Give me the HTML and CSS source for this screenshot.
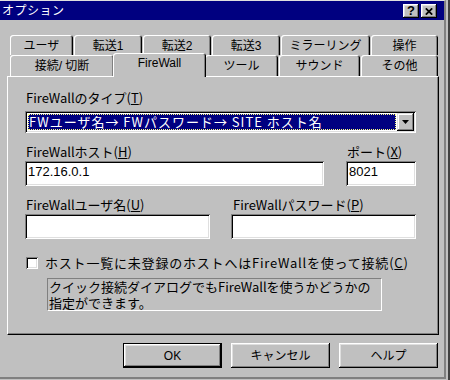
FILE: index.html
```html
<!DOCTYPE html>
<html lang="ja">
<head>
    <meta charset="utf-8">
    <title>オプション</title>
    <link rel="stylesheet" href="styles.css">
</head>
<body>
<div class="screen">
    <div class="window">
        <div class="titlebar">
            <span class="title">オプション</span>
            <div class="caption-buttons">
                <span class="cap-btn help">?</span>
                <span class="cap-btn close">
                    <svg width="8" height="7" viewBox="0 0 8 7"><path d="M0.8 0.3L7.2 6.7M7.2 0.3L0.8 6.7" stroke="#000" stroke-width="1.7" fill="none"/></svg>
                </span>
            </div>
        </div>

        <div class="client">
            <div class="tabs">
                <div class="tab-row row-back">
                    <div class="tab">ユーザ</div>
                    <div class="tab">転送1</div>
                    <div class="tab">転送2</div>
                    <div class="tab">転送3</div>
                    <div class="tab">ミラーリング</div>
                    <div class="tab">操作</div>
                </div>
                <div class="tab-row row-front">
                    <div class="tab">接続/ 切断</div>
                    <div class="tab selected">FireWall</div>
                    <div class="tab">ツール</div>
                    <div class="tab">サウンド</div>
                    <div class="tab">その他</div>
                </div>
            </div>

            <div class="panel">
                <div class="label">FireWallのタイプ(<u>T</u>)</div>
                <div class="combo">
                    <div class="combo-value">FWユーザ名→ FWパスワード→ SITE ホスト名</div>
                    <div class="combo-btn">
                        <svg width="7" height="4" viewBox="0 0 7 4"><path d="M0 0h7l-3.5 4z" fill="#000"/></svg>
                    </div>
                </div>

                <div class="field-row host-row">
                    <div class="field">
                        <div class="label">FireWallホスト(<u>H</u>)</div>
                        <div class="edit">172.16.0.1</div>
                    </div>
                    <div class="field">
                        <div class="label">ポート(<u>X</u>)</div>
                        <div class="edit">8021</div>
                    </div>
                </div>

                <div class="field-row user-row">
                    <div class="field">
                        <div class="label">FireWallユーザ名(<u>U</u>)</div>
                        <div class="edit"></div>
                    </div>
                    <div class="field">
                        <div class="label pass-label">FireWallパスワード(<u>P</u>)</div>
                        <div class="edit"></div>
                    </div>
                </div>

                <div class="check-row">
                    <span class="checkbox"></span>
                    <span class="check-text">ホスト一覧に未登録のホストへはFireWallを使って接続(<u>C</u>)</span>
                </div>
                <div class="note">
                    <div class="note-line">クイック接続ダイアログでもFireWallを使うかどうかの</div>
                    <div class="note-line">指定ができます。</div>
                </div>
            </div>

            <div class="buttons">
                <div class="btn default"><span class="btn-face">OK</span></div>
                <div class="btn"><span class="btn-face">キャンセル</span></div>
                <div class="btn"><span class="btn-face">ヘルプ</span></div>
            </div>
        </div>
    </div>
</div>
</body>
</html>
```

FILE: styles.css
```css
body { margin: 0; background: #c0c0c0; color: #000; font: 12px/14px "Liberation Sans", "Noto Sans CJK JP", sans-serif; }

.screen { width: 450px; height: 380px; box-sizing: border-box; border-right: 2px solid #404040; padding-right: 2px; }
.window { height: 379px; box-sizing: border-box; border-top: 1px solid #dfdfdf; border-right: 2px solid #808080; border-bottom: 2px solid #808080; }

/* title bar */
.titlebar { height: 19px; background: #000080; color: #fff; display: flex; align-items: center; justify-content: space-between; padding: 0 7px 0 2px; }
.title { font-size: 12px; letter-spacing: 0.5px; }
.caption-buttons { display: flex; gap: 2px; }
.cap-btn { width: 16px; height: 14px; box-sizing: border-box; background: #c0c0c0; color: #000; display: flex; align-items: center; justify-content: center; font-weight: bold; font-size: 13px; line-height: 12px; padding-top: 1px;
    box-shadow: inset -1px -1px #000, inset 1px 1px #fff, inset -2px -2px #808080, inset 2px 2px #dfdfdf; }

.client { padding: 15px 5px 0 7px; }

/* tabs */
.tabs { padding-left: 3px; }
.tab-row { display: grid; column-gap: 1px; }
.row-back { height: 20px; grid-template-columns: 63px 68px 68px 68px 89px 67px; }
.row-front { height: 21px; grid-template-columns: 104px 89px 73px 81px 77px; }
.tab { background: #c0c0c0; text-align: center; padding-top: 4px; box-sizing: border-box; border-radius: 3px 3px 0 0;
    box-shadow: inset 1px 1px #fff, inset -1px 0 #000, inset -2px 0 #808080; }
.tab.selected { margin: -2px -2px -1px -2px; padding-top: 3px; z-index: 1; }

/* page */
.panel { height: 259px; box-sizing: border-box; padding: 14px 0 0 17px; font-family: "Noto Sans CJK JP", sans-serif; font-size: 13px;
    border-top: 1px solid #fff; border-left: 1px solid #fff; border-right: 1px solid #000; border-bottom: 1px solid #000; box-shadow: inset -1px -1px #808080; }
.label { padding-left: 1px; }
.panel > .label { margin-bottom: 6px; }

.combo { width: 391px; height: 22px; box-sizing: border-box; padding: 2px; display: flex; background: #fff;
    box-shadow: inset 1px 1px #808080, inset -1px -1px #fff, inset 2px 2px #000, inset -2px -2px #dfdfdf; }
.combo-value { flex: 1; margin: 1px; background: #000080; color: #fff; border: 1px dotted #ffff7f; line-height: 14px; letter-spacing: 1px; white-space: nowrap; }
.combo-btn { width: 17px; background: #c0c0c0; display: flex; align-items: center; justify-content: center;
    box-shadow: inset -1px -1px #000, inset 1px 1px #dfdfdf, inset -2px -2px #808080, inset 2px 2px #fff; }

.field-row { display: grid; margin-top: 12px; }
.host-row { grid-template-columns: 299px 70px; column-gap: 22px; }
.user-row { grid-template-columns: 185px 185px; column-gap: 21px; }
.field .label { margin-bottom: 2px; }
.pass-label { padding-left: 2px; }
.edit { height: 25px; box-sizing: border-box; padding: 2px 3px 0; line-height: 18px; background: #fff; font-family: "Liberation Sans", sans-serif;
    box-shadow: inset 1px 1px #808080, inset -1px -1px #fff, inset 2px 2px #000, inset -2px -2px #dfdfdf; }

.check-row { display: flex; align-items: center; gap: 7px; margin-top: 17px; padding-left: 1px; height: 14px; }
.check-text { letter-spacing: 0.8px; }
.checkbox { width: 12px; height: 12px; box-sizing: border-box; background: #fff;
    box-shadow: inset 1px 1px #808080, inset -1px -1px #fff, inset 2px 2px #000, inset -2px -2px #dfdfdf; }

.note { width: 335px; height: 33px; box-sizing: border-box; margin: 8px 0 0 22px; padding-left: 1px;
    border-top: 1px solid #808080; border-left: 1px solid #808080; border-right: 1px solid #fff; border-bottom: 1px solid #fff; }
.note-line { height: 16px; line-height: 16px; }

/* buttons */
.buttons { display: flex; justify-content: flex-end; gap: 9px; margin-top: 8px; padding-right: 1px; }
.btn { width: 99px; height: 25px; box-sizing: border-box; display: flex;
    box-shadow: inset -1px -1px #000, inset 1px 1px #fff, inset -2px -2px #808080, inset 2px 2px #dfdfdf; }
.btn-face { flex: 1; display: flex; align-items: center; justify-content: center; }
.btn.default { border: 1px solid #000; box-shadow: none; }
.btn.default .btn-face { box-shadow: inset -1px -1px #000, inset 1px 1px #fff, inset -2px -2px #808080, inset 2px 2px #dfdfdf; }
```
